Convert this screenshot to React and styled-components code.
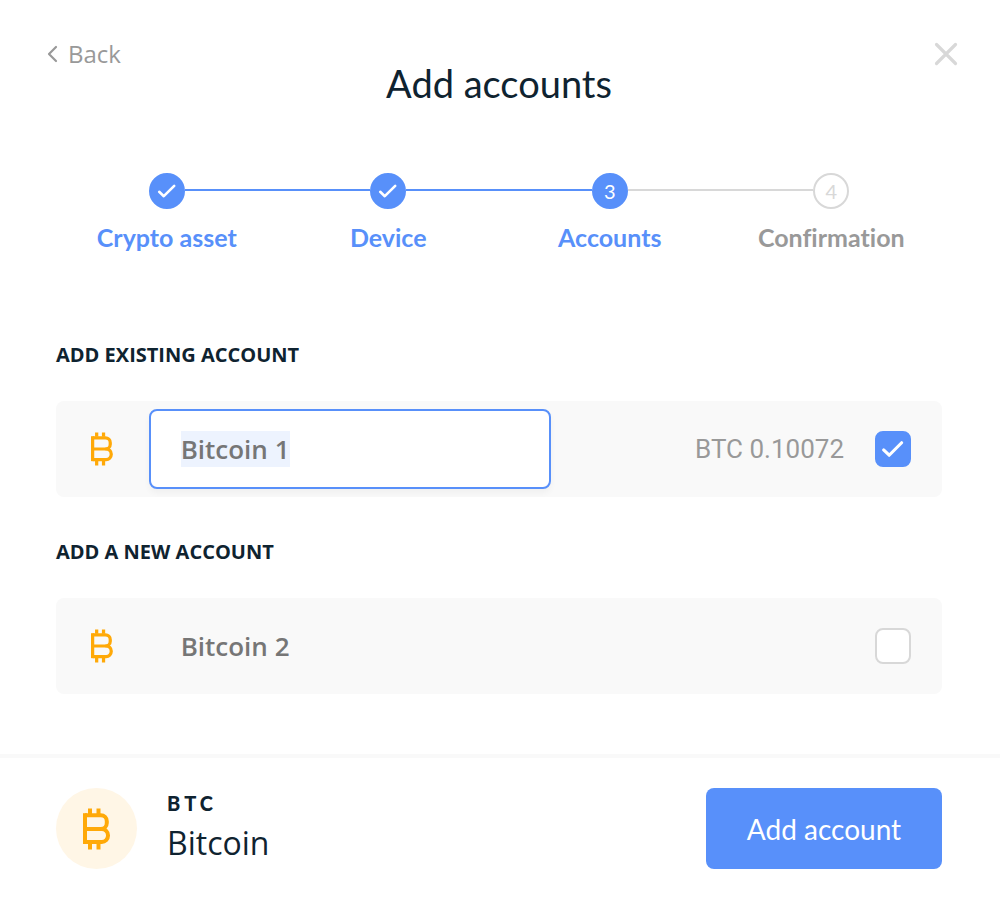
import React, { useEffect, useRef, useState } from "react";
import styled, { createGlobalStyle } from "styled-components";

const blue = "#5890fa";
const dark = "#0f2330";
const grey = "#999999";
const lightGrey = "#d8d8d8";
const orange = "#ffa908";

const GlobalStyle = createGlobalStyle`
  * {
    box-sizing: border-box;
  }
  body {
    margin: 0;
    background: #ffffff;
    color: ${dark};
    font-family: "Open Sans", sans-serif;
  }
  button {
    border: 0;
    padding: 0;
    background: none;
    font-family: inherit;
    cursor: pointer;
  }
`;

const Modal = styled.div`
  display: flex;
  flex-direction: column;
  min-height: 100vh;
`;

const Header = styled.header`
  display: grid;
  grid-template-columns: 1fr auto 1fr;
  align-items: start;
  padding: 36px 58px 0 56px;
`;

const BackButton = styled.button`
  display: flex;
  align-items: center;
  gap: 8px;
  justify-self: start;
  margin-left: -10px;
  color: ${grey};
  font-size: 24px;
  line-height: 36px;
`;

const CloseButton = styled.button`
  display: flex;
  align-items: center;
  justify-self: end;
  height: 36px;
  margin-right: -16px;
  color: ${lightGrey};
`;

const Title = styled.h1`
  margin: 24px 0 0;
  font-family: Lato, sans-serif;
  font-size: 38px;
  font-weight: 400;
  line-height: 46px;
`;

const Body = styled.main`
  flex: 1;
  padding: 67px 58px 60px 56px;
`;

const Stepper = styled.ol`
  display: grid;
  grid-template-columns: repeat(4, 1fr);
  margin: 0 0 87px;
  padding: 0;
  list-style: none;
`;

const Step = styled.li`
  text-align: center;
`;

const Track = styled.div`
  display: flex;
  align-items: center;
`;

const Line = styled.span`
  flex: 1;
  height: 2px;
  margin-bottom: 2px;
  background: ${({ $color }) => $color || "transparent"};
`;

const Bullet = styled.span`
  display: flex;
  align-items: center;
  justify-content: center;
  width: 36px;
  height: 36px;
  border: 2px solid ${({ $reached }) => ($reached ? blue : lightGrey)};
  border-radius: 50%;
  background: ${({ $reached }) => ($reached ? blue : "#ffffff")};
  color: ${({ $reached }) => ($reached ? "#ffffff" : lightGrey)};
  font-family: Lato, sans-serif;
  font-size: 20px;
  line-height: 32px;
`;

const StepLabel = styled.div`
  margin-top: 12px;
  color: ${({ $reached }) => ($reached ? blue : grey)};
  font-family: Lato, sans-serif;
  font-size: 25px;
  font-weight: 700;
  font-variant-ligatures: none;
  line-height: 32px;
`;

const Section = styled.section`
  margin-bottom: 40px;

  &:last-child {
    margin-bottom: 0;
  }
`;

const SectionTitle = styled.h2`
  margin: 0 0 31px;
  font-size: 20px;
  font-weight: 700;
  line-height: 30px;
  text-transform: uppercase;
`;

const Row = styled.div`
  display: flex;
  align-items: center;
  height: 96px;
  padding: 0 31px 0 35px;
  border-radius: 8px;
  background: #f9f9f9;
`;

const NameInput = styled.input`
  width: 402px;
  min-width: 0;
  height: 80px;
  margin-left: 35px;
  padding: 0 30px;
  border: 2px solid ${blue};
  border-radius: 8px;
  outline: 0;
  background: #ffffff;
  box-shadow: 0 4px 6px rgba(0, 0, 0, 0.04);
  color: #767676;
  font-family: "Open Sans", sans-serif;
  font-size: 26px;
  font-weight: 600;

  &::selection {
    background: #edf3fe;
    color: #767676;
  }
`;

const NameLabel = styled.label`
  margin-left: 67px;
  color: #767676;
  font-size: 26px;
  font-weight: 600;
`;

const Balance = styled.span`
  margin-left: auto;
  padding-left: 16px;
  color: ${grey};
  font-family: Roboto, sans-serif;
  font-size: 26px;
  white-space: nowrap;
`;

const CheckWrap = styled.span`
  display: grid;
  flex: none;
  margin-left: ${({ $push }) => ($push ? "auto" : "31px")};

  > * {
    grid-area: 1 / 1;
    place-self: center;
  }
  svg {
    pointer-events: none;
  }
`;

const CheckInput = styled.input`
  appearance: none;
  width: 36px;
  height: 36px;
  margin: 0;
  border: 2px solid ${lightGrey};
  border-radius: 8px;
  background: #ffffff;
  cursor: pointer;

  &:checked {
    border-color: ${blue};
    background: ${blue};
  }
`;

const Footer = styled.footer`
  display: flex;
  align-items: center;
  padding: 30px 58px 28px 56px;
  border-top: 4px solid #f9f9f9;
`;

const Coin = styled.div`
  display: flex;
  align-items: center;
  justify-content: center;
  width: 81px;
  height: 81px;
  margin-right: 30px;
  border-radius: 50%;
  background: #fff6e6;
`;

const Ticker = styled.div`
  margin-bottom: 4px;
  font-family: Lato, sans-serif;
  font-size: 20px;
  font-weight: 900;
  letter-spacing: 4px;
  line-height: 24px;
`;

const CoinName = styled.div`
  font-size: 32px;
  line-height: 48px;
`;

const AddButton = styled.button`
  width: 236px;
  height: 81px;
  margin-left: auto;
  border-radius: 8px;
  background: ${blue};
  color: #ffffff;
  font-family: Lato, sans-serif;
  font-size: 28px;
`;

function CheckIcon({ size }) {
  return (
    <svg width={size} height={size} viewBox="0 0 20 20" fill="none" aria-hidden="true">
      <path
        d="M2.200 10.800 6.800 15.200 17.200 4.800"
        stroke="#ffffff"
        strokeWidth="2.6"
        strokeLinecap="round"
        strokeLinejoin="round"
      />
    </svg>
  );
}

function BitcoinIcon({ height }) {
  return (
    <svg
      width={(height * 28) / 42}
      height={height}
      viewBox="0 0 28 42"
      fill="none"
      stroke={orange}
      strokeWidth="4"
      aria-hidden="true"
    >
      <path d="M2 7.200H17.800a6 6 0 0 1 6 6V15a6 6 0 0 1-6 6H2" />
      <path d="M17.800 21h1a6.200 6.200 0 0 1 6.200 6.200v.6a6.200 6.200 0 0 1-6.200 6.200H2" />
      <path d="M2 5.200V36" />
      <path d="M7 .5V6M15.500 .5V6M7 35v6.500M15.500 35v6.500" />
    </svg>
  );
}

const steps = ["Crypto asset", "Device", "Accounts", "Confirmation"];
const current = 2;

function lineColor(index) {
  if (index < 1 || index >= steps.length) return null;
  return index <= current ? blue : lightGrey;
}

function Checkbox({ push, ...props }) {
  return (
    <CheckWrap $push={push}>
      <CheckInput type="checkbox" {...props} />
      {props.checked && <CheckIcon size={24} />}
    </CheckWrap>
  );
}

export default function App() {
  const nameRef = useRef(null);
  const [name, setName] = useState("Bitcoin 1");
  const [existing, setExisting] = useState(true);
  const [fresh, setFresh] = useState(false);

  useEffect(() => {
    nameRef.current.focus();
    nameRef.current.select();
  }, []);

  return (
    <Modal>
      <GlobalStyle />
      <Header>
        <BackButton type="button">
          <svg width="14" height="18" viewBox="0 0 14 18" fill="none" aria-hidden="true">
            <path d="M10 2 3 9l7 7" stroke="currentColor" strokeWidth="2.2" strokeLinecap="round" strokeLinejoin="round" />
          </svg>
          Back
        </BackButton>
        <Title>Add accounts</Title>
        <CloseButton type="button" aria-label="Close">
          <svg width="24" height="24" viewBox="0 0 24 24" fill="none" aria-hidden="true">
            <path d="m2.500 2.500 19 19m0-19-19 19" stroke="currentColor" strokeWidth="3.2" strokeLinecap="round" />
          </svg>
        </CloseButton>
      </Header>

      <Body>
        <Stepper>
          {steps.map((label, i) => (
            <Step key={label}>
              <Track>
                <Line $color={lineColor(i)} />
                <Bullet $reached={i <= current}>
                  {i < current ? <CheckIcon size={20} /> : i + 1}
                </Bullet>
                <Line $color={lineColor(i + 1)} />
              </Track>
              <StepLabel $reached={i <= current}>{label}</StepLabel>
            </Step>
          ))}
        </Stepper>

        <Section>
          <SectionTitle>Add existing account</SectionTitle>
          <Row>
            <BitcoinIcon height={34} />
            <NameInput
              ref={nameRef}
              aria-label="Account name"
              value={name}
              onChange={(e) => setName(e.target.value)}
            />
            <Balance>BTC 0.10072</Balance>
            <Checkbox
              aria-label={name}
              checked={existing}
              onChange={(e) => setExisting(e.target.checked)}
            />
          </Row>
        </Section>

        <Section>
          <SectionTitle>Add a new account</SectionTitle>
          <Row>
            <BitcoinIcon height={34} />
            <NameLabel htmlFor="new-account">Bitcoin 2</NameLabel>
            <Checkbox
              push
              id="new-account"
              checked={fresh}
              onChange={(e) => setFresh(e.target.checked)}
            />
          </Row>
        </Section>
      </Body>

      <Footer>
        <Coin>
          <BitcoinIcon height={42} />
        </Coin>
        <div>
          <Ticker>BTC</Ticker>
          <CoinName>Bitcoin</CoinName>
        </div>
        <AddButton type="button">Add account</AddButton>
      </Footer>
    </Modal>
  );
}
